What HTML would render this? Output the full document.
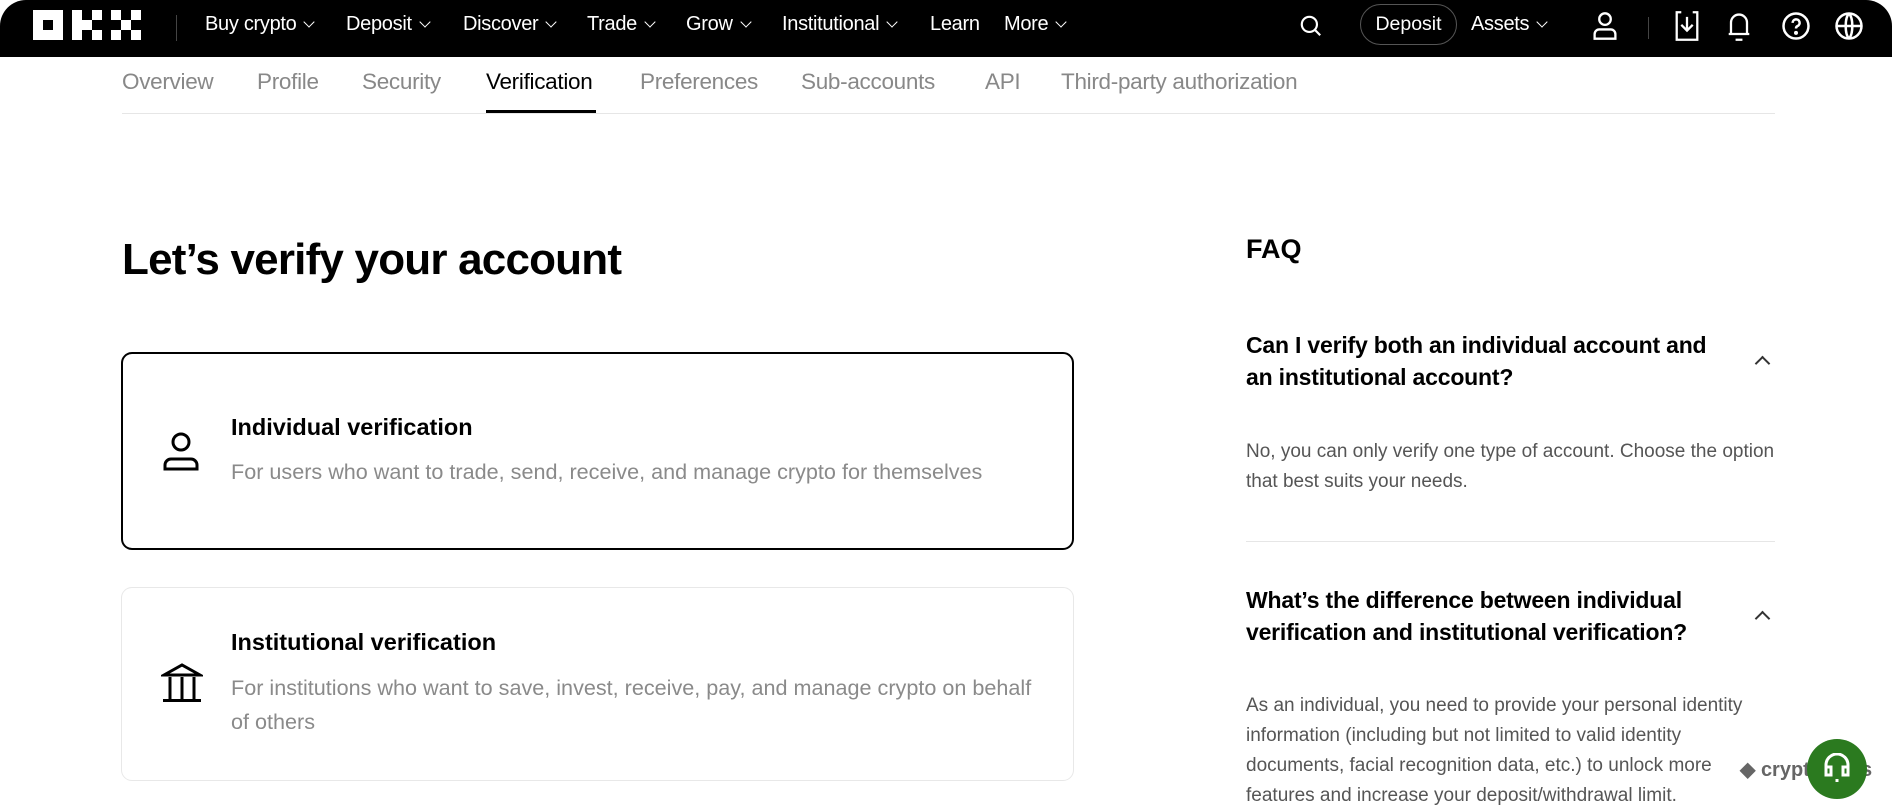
<!DOCTYPE html>
<html><head><meta charset="utf-8"><style>
*{box-sizing:border-box;margin:0;padding:0}
body{width:1892px;height:811px;overflow:hidden;background:#fff;font-family:"Liberation Sans",sans-serif;color:#000;position:relative}
.hdr{position:absolute;left:0;top:0;width:1892px;height:57px;background:#000;border-radius:26px 26px 0 0}
.a{position:absolute;white-space:nowrap}
.nav{color:#fff;font-size:20px;top:13px;letter-spacing:-0.3px}
.chev{display:inline-block;width:8px;height:8px;border-right:1.6px solid #fff;border-bottom:1.6px solid #fff;transform:rotate(45deg);margin-left:9px;position:relative;top:-4px}
.tab{top:69px;font-size:22.5px;color:#888;letter-spacing:-0.3px}
.sub{font-size:21.6px;color:#8a8a8a}
.q{font-size:23px;font-weight:bold;letter-spacing:-0.2px;line-height:32px}
.ans{font-size:19px;color:#555;line-height:30px}
.up{position:absolute;width:11px;height:11px;border-left:2px solid #333;border-top:2px solid #333;transform:rotate(45deg)}
</style></head><body>
<div class="hdr"></div>
<svg class="a" style="left:33px;top:10px" width="108" height="30" viewBox="0 0 108 30"><g fill="#fff">
<rect x="0" y="0" width="30" height="30"/><rect x="39" y="0" width="10" height="30"/><rect x="49" y="10" width="10" height="10"/><rect x="59" y="0" width="10" height="10"/><rect x="59" y="20" width="10" height="10"/>
<rect x="78" y="0" width="10" height="10"/><rect x="98" y="0" width="10" height="10"/><rect x="88" y="10" width="10" height="10"/><rect x="78" y="20" width="10" height="10"/><rect x="98" y="20" width="10" height="10"/></g>
<rect x="10" y="10" width="10" height="10" fill="#000"/></svg>
<div class="a" style="left:176px;top:15px;width:1px;height:26px;background:#444"></div>
<div class="a nav" style="left:205px">Buy crypto<span class="chev"></span></div>
<div class="a nav" style="left:346px">Deposit<span class="chev"></span></div>
<div class="a nav" style="left:463px">Discover<span class="chev"></span></div>
<div class="a nav" style="left:587px">Trade<span class="chev"></span></div>
<div class="a nav" style="left:686px">Grow<span class="chev"></span></div>
<div class="a nav" style="left:782px">Institutional<span class="chev"></span></div>
<div class="a nav" style="left:930px">Learn</div>
<div class="a nav" style="left:1004px">More<span class="chev"></span></div>
<svg class="a" style="left:1298px;top:13px" width="26" height="26" viewBox="0 0 24 24" fill="none" stroke="#fff" stroke-width="2"><circle cx="10.5" cy="10.5" r="7"/><path d="M15.5 15.5l5 5"/></svg>
<div class="a" style="left:1360px;top:4px;width:97px;height:41px;border:1px solid #555;border-radius:21px;color:#fff;font-size:19.5px;text-align:center;line-height:39px">Deposit</div>
<div class="a nav" style="left:1471px">Assets<span class="chev"></span></div>
<svg class="a" style="left:1591px;top:11px" width="28" height="30" viewBox="0 0 24 26" fill="none" stroke="#fff" stroke-width="2"><circle cx="12" cy="7" r="5"/><path d="M3 24v-4a4 4 0 0 1 4-4h10a4 4 0 0 1 4 4v4z"/></svg>
<div class="a" style="left:1648px;top:17px;width:1px;height:22px;background:#444"></div>
<svg class="a" style="left:1673px;top:10px" width="28" height="32" viewBox="0 0 24 28" fill="none" stroke="#fff" stroke-width="2"><path d="M7 2H3v24h18V2h-4M12 6v12M7 13l5 5 5-5"/></svg>
<svg class="a" style="left:1725px;top:10px" width="28" height="32" viewBox="0 0 24 28" fill="none" stroke="#fff" stroke-width="2"><path d="M5 21V11a7 7 0 0 1 14 0v10zM3 21h18M9 26h6"/></svg>
<svg class="a" style="left:1781px;top:11px" width="30" height="30" viewBox="0 0 24 24" fill="none" stroke="#fff" stroke-width="2"><circle cx="12" cy="12" r="10"/><path d="M9.3 9.5a2.8 2.8 0 1 1 3.8 2.6c-.8.4-1.1 1-1.1 1.9"/><circle cx="12" cy="17.5" r=".6" fill="#fff"/></svg>
<svg class="a" style="left:1834px;top:11px" width="30" height="30" viewBox="0 0 24 24" fill="none" stroke="#fff" stroke-width="2"><circle cx="12" cy="12" r="10"/><path d="M2 12h20M12 2c-3.5 3.5-3.5 16.5 0 20M12 2c3.5 3.5 3.5 16.5 0 20"/></svg>

<div class="a tab" style="left:122px">Overview</div>
<div class="a tab" style="left:257px">Profile</div>
<div class="a tab" style="left:362px">Security</div>
<div class="a tab" style="left:486px;color:#000">Verification</div>
<div class="a tab" style="left:640px">Preferences</div>
<div class="a tab" style="left:801px">Sub-accounts</div>
<div class="a tab" style="left:985px">API</div>
<div class="a tab" style="left:1061px">Third-party authorization</div>
<div class="a" style="left:122px;top:113px;width:1653px;height:1px;background:#e6e6e6"></div>
<div class="a" style="left:486px;top:110px;width:110px;height:3px;background:#000"></div>

<div class="a" style="left:122px;top:235px;font-size:44px;font-weight:bold;letter-spacing:-0.8px">Let’s verify your account</div>

<div class="a" style="left:121px;top:352px;width:953px;height:198px;border:2.5px solid #000;border-radius:11px"></div>
<svg class="a" style="left:162px;top:431px" width="38" height="40" viewBox="0 0 38 40" fill="none" stroke="#000" stroke-width="3"><circle cx="19" cy="11" r="8"/><path d="M3 38v-4a6 6 0 0 1 6-6h20a6 6 0 0 1 6 6v4z"/></svg>
<div class="a" style="left:231px;top:414px;font-size:23.5px;font-weight:bold">Individual verification</div>
<div class="a sub" style="left:231px;top:459px">For users who want to trade, send, receive, and manage crypto for themselves</div>

<div class="a" style="left:121px;top:587px;width:953px;height:194px;border:1px solid #e8e8e8;border-radius:11px"></div>
<svg class="a" style="left:161px;top:663px" width="42" height="40" viewBox="0 0 42 40" fill="none" stroke="#000" stroke-width="3"><path d="M3 12L21 2l18 10zM9 14v22M21 14v22M33 14v22M2 37.5h38"/></svg>
<div class="a" style="left:231px;top:629px;font-size:23.5px;font-weight:bold">Institutional verification</div>
<div class="a sub" style="left:231px;top:671px;line-height:34px">For institutions who want to save, invest, receive, pay, and manage crypto on behalf<br>of others</div>

<div class="a" style="left:1246px;top:234px;font-size:27px;font-weight:bold">FAQ</div>
<div class="a q" style="left:1246px;top:329px">Can I verify both an individual account and<br>an institutional account?</div>
<div class="up" style="left:1757px;top:358px"></div>
<div class="a ans" style="left:1246px;top:437px">No, you can only verify one type of account. Choose the option<br>that best suits your needs.</div>
<div class="a" style="left:1246px;top:541px;width:529px;height:1px;background:#e6e6e6"></div>
<div class="a q" style="left:1246px;top:584px">What’s the difference between individual<br>verification and institutional verification?</div>
<div class="up" style="left:1757px;top:613px"></div>
<div class="a ans" style="left:1246px;top:691px">As an individual, you need to provide your personal identity<br>information (including but not limited to valid identity<br>documents, facial recognition data, etc.) to unlock more<br>features and increase your deposit/withdrawal limit.</div>

<div class="a" style="left:1740px;top:757px;font-size:20px;font-weight:bold;color:#666">◆ cryptonews</div>
<div class="a" style="left:1807px;top:739px;width:60px;height:60px;border-radius:50%;background:#2b7a1f"></div>
<svg class="a" style="left:1822px;top:753px" width="30" height="32" viewBox="0 0 30 32" fill="none" stroke="#fff" stroke-width="3"><path d="M4 16v-4a11 11 0 0 1 22 0v4M4 14h5v8H4zM21 14h5v8h-5zM15 26v3"/></svg>
</body></html>
